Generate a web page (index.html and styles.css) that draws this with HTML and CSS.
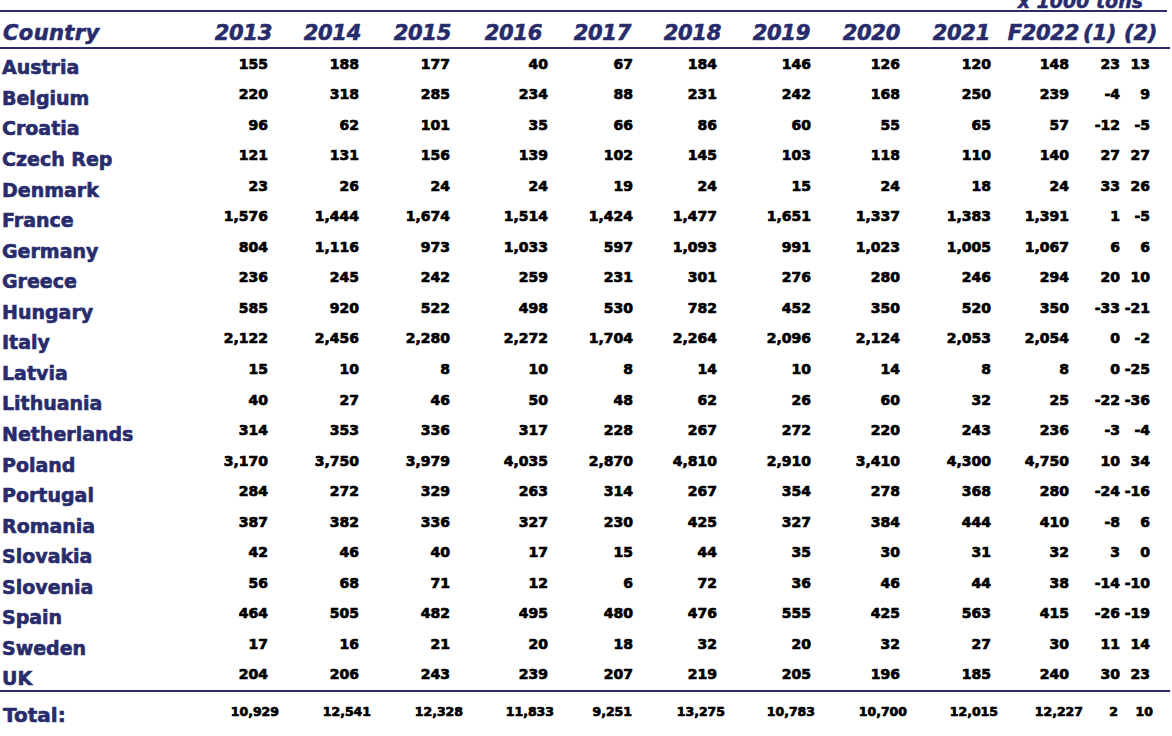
FILE: index.html
```html
<!DOCTYPE html>
<html lang="en">
<head>
<meta charset="utf-8">
<title>Country table</title>
<link rel="stylesheet" href="styles.css">
</head>
<body>
<div class="sheet">
  <div class="unit"><span>x 1000 tons</span></div>
  <div class="row head">
    <div class="name">Country</div>
    <div>2013</div><div>2014</div><div>2015</div><div>2016</div><div>2017</div><div>2018</div><div>2019</div><div>2020</div><div>2021</div><div>F2022</div><div>(1)</div><div>(2)</div>
  </div>
  <div class="body">
    <div class="row data"><div class="name">Austria</div><div>155</div><div>188</div><div>177</div><div>40</div><div>67</div><div>184</div><div>146</div><div>126</div><div>120</div><div>148</div><div>23</div><div>13</div></div>
    <div class="row data"><div class="name">Belgium</div><div>220</div><div>318</div><div>285</div><div>234</div><div>88</div><div>231</div><div>242</div><div>168</div><div>250</div><div>239</div><div>-4</div><div>9</div></div>
    <div class="row data"><div class="name">Croatia</div><div>96</div><div>62</div><div>101</div><div>35</div><div>66</div><div>86</div><div>60</div><div>55</div><div>65</div><div>57</div><div>-12</div><div>-5</div></div>
    <div class="row data"><div class="name">Czech Rep</div><div>121</div><div>131</div><div>156</div><div>139</div><div>102</div><div>145</div><div>103</div><div>118</div><div>110</div><div>140</div><div>27</div><div>27</div></div>
    <div class="row data"><div class="name">Denmark</div><div>23</div><div>26</div><div>24</div><div>24</div><div>19</div><div>24</div><div>15</div><div>24</div><div>18</div><div>24</div><div>33</div><div>26</div></div>
    <div class="row data"><div class="name">France</div><div>1,576</div><div>1,444</div><div>1,674</div><div>1,514</div><div>1,424</div><div>1,477</div><div>1,651</div><div>1,337</div><div>1,383</div><div>1,391</div><div>1</div><div>-5</div></div>
    <div class="row data"><div class="name">Germany</div><div>804</div><div>1,116</div><div>973</div><div>1,033</div><div>597</div><div>1,093</div><div>991</div><div>1,023</div><div>1,005</div><div>1,067</div><div>6</div><div>6</div></div>
    <div class="row data"><div class="name">Greece</div><div>236</div><div>245</div><div>242</div><div>259</div><div>231</div><div>301</div><div>276</div><div>280</div><div>246</div><div>294</div><div>20</div><div>10</div></div>
    <div class="row data"><div class="name">Hungary</div><div>585</div><div>920</div><div>522</div><div>498</div><div>530</div><div>782</div><div>452</div><div>350</div><div>520</div><div>350</div><div>-33</div><div>-21</div></div>
    <div class="row data"><div class="name">Italy</div><div>2,122</div><div>2,456</div><div>2,280</div><div>2,272</div><div>1,704</div><div>2,264</div><div>2,096</div><div>2,124</div><div>2,053</div><div>2,054</div><div>0</div><div>-2</div></div>
    <div class="row data"><div class="name">Latvia</div><div>15</div><div>10</div><div>8</div><div>10</div><div>8</div><div>14</div><div>10</div><div>14</div><div>8</div><div>8</div><div>0</div><div>-25</div></div>
    <div class="row data"><div class="name">Lithuania</div><div>40</div><div>27</div><div>46</div><div>50</div><div>48</div><div>62</div><div>26</div><div>60</div><div>32</div><div>25</div><div>-22</div><div>-36</div></div>
    <div class="row data"><div class="name">Netherlands</div><div>314</div><div>353</div><div>336</div><div>317</div><div>228</div><div>267</div><div>272</div><div>220</div><div>243</div><div>236</div><div>-3</div><div>-4</div></div>
    <div class="row data"><div class="name">Poland</div><div>3,170</div><div>3,750</div><div>3,979</div><div>4,035</div><div>2,870</div><div>4,810</div><div>2,910</div><div>3,410</div><div>4,300</div><div>4,750</div><div>10</div><div>34</div></div>
    <div class="row data"><div class="name">Portugal</div><div>284</div><div>272</div><div>329</div><div>263</div><div>314</div><div>267</div><div>354</div><div>278</div><div>368</div><div>280</div><div>-24</div><div>-16</div></div>
    <div class="row data"><div class="name">Romania</div><div>387</div><div>382</div><div>336</div><div>327</div><div>230</div><div>425</div><div>327</div><div>384</div><div>444</div><div>410</div><div>-8</div><div>6</div></div>
    <div class="row data"><div class="name">Slovakia</div><div>42</div><div>46</div><div>40</div><div>17</div><div>15</div><div>44</div><div>35</div><div>30</div><div>31</div><div>32</div><div>3</div><div>0</div></div>
    <div class="row data"><div class="name">Slovenia</div><div>56</div><div>68</div><div>71</div><div>12</div><div>6</div><div>72</div><div>36</div><div>46</div><div>44</div><div>38</div><div>-14</div><div>-10</div></div>
    <div class="row data"><div class="name">Spain</div><div>464</div><div>505</div><div>482</div><div>495</div><div>480</div><div>476</div><div>555</div><div>425</div><div>563</div><div>415</div><div>-26</div><div>-19</div></div>
    <div class="row data"><div class="name">Sweden</div><div>17</div><div>16</div><div>21</div><div>20</div><div>18</div><div>32</div><div>20</div><div>32</div><div>27</div><div>30</div><div>11</div><div>14</div></div>
    <div class="row data"><div class="name">UK</div><div>204</div><div>206</div><div>243</div><div>239</div><div>207</div><div>219</div><div>205</div><div>196</div><div>185</div><div>240</div><div>30</div><div>23</div></div>
  </div>
  <div class="row total"><div class="name">Total:</div><div>10,929</div><div>12,541</div><div>12,328</div><div>11,833</div><div>9,251</div><div>13,275</div><div>10,783</div><div>10,700</div><div>12,015</div><div>12,227</div><div>2</div><div>10</div></div>
</div>
</body>
</html>
```

FILE: styles.css
```css
html, body {
  margin: 0;
  padding: 0;
  background: #ffffff;
}

body {
  font-family: "DejaVu Sans", "Liberation Sans", sans-serif;
  font-weight: bold;
  color: #000000;
  overflow: hidden;
}

.sheet {
  width: 1170px;
}

.unit {
  height: 10px;
  width: 1167px;
  box-sizing: content-box;
  display: flex;
  justify-content: flex-end;
  align-items: flex-end;
  border-bottom: 2px solid #282c6c;
}

.unit span {
  font-size: 19px;
  line-height: 19px;
  font-style: italic;
  color: #282c6c;
  margin-bottom: -1px;
  margin-right: 24px;
  white-space: nowrap;
  -webkit-text-stroke: 0.5px #282c6c;
}

.row {
  display: grid;
  text-align: right;
  white-space: nowrap;
}

.row .name {
  text-align: left;
  color: #282c6c;
  -webkit-text-stroke: 0.6px #282c6c;
}

.head {
  height: 37px;
  box-sizing: border-box;
  padding-top: 9px;
  border-bottom: 2px solid #282c6c;
  grid-template-columns: 200px 72px 89px 90px 91px 89px 90px 89px 90px 90px 89px 37px 41px;
  font-size: 21px;
  line-height: 25px;
  font-style: italic;
  color: #282c6c;
  letter-spacing: -0.3px;
  -webkit-text-stroke: 0.6px #282c6c;
}

.head .name {
  padding-left: 3px;
  letter-spacing: 0.4px;
}

.body {
  border-bottom: 2px solid #282c6c;
}

.data {
  height: 30.55px;
  box-sizing: border-box;
  grid-template-columns: 200px 68px 91px 91px 98px 85px 84px 94px 89px 91px 78px 51px 30px;
  font-size: 14px;
  line-height: 17px;
  -webkit-text-stroke: 0.7px #000000;
}

.data > div {
  padding-top: 6.5px;
}

.data .name {
  font-size: 19px;
  line-height: 22px;
  padding-top: 7.4px;
  padding-left: 2px;
}

.total {
  height: 41px;
  grid-template-columns: 200px 79px 92px 92px 91px 78px 93px 90px 92px 91px 85px 35px 35px;
  font-size: 12.5px;
  line-height: 15px;
  -webkit-text-stroke: 0.7px #000000;
}

.total > div {
  padding-top: 12px;
}

.total .name {
  font-size: 20px;
  line-height: 24px;
  padding-top: 11px;
  padding-left: 3px;
}
```
